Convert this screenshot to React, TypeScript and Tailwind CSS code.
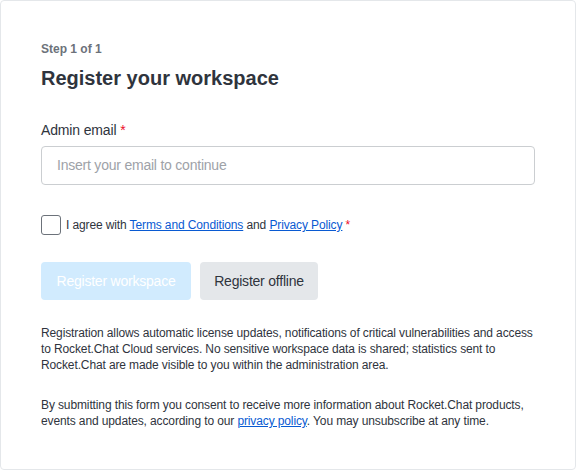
import React from "react";

export default function App() {
  return (
    <div className="w-[576px] h-[470px] bg-white" style={{ fontFamily: "'Liberation Sans', Arial, sans-serif" }}>
      <div className="w-[576px] h-[470px] border border-[#e4e7ea] rounded-[4px] px-10 pt-[40px] text-[#2f343d]">
        <div className="text-[12px] leading-4 font-bold text-[#6c727a]">Step 1 of 1</div>
        <h1 className="mt-[7px] text-[20px] leading-7 font-bold text-[#2f343d]">Register your workspace</h1>
        <div className="mt-[28px] text-[14px] leading-5 tracking-[-0.15px]">
          Admin email <span className="text-[#ec0d2a]">*</span>
        </div>
        <div className="mt-[6px] h-[39px] w-[494px] border border-[#cbced1] rounded-[4px] flex items-center pl-[15px] pr-4">
          <span className="text-[14px] text-[#9ea2a8] tracking-[-0.22px]">Insert your email to continue</span>
        </div>
        <div className="mt-[30px] flex items-center gap-[5px] text-[12px] leading-4 tracking-[-0.12px]">
          <span className="w-[20px] h-[20px] border-[1.5px] border-[#6c727a] rounded-[3px] box-border" />
          <span>
            I agree with <a className="text-[#095ad2] underline">Terms and Conditions</a> and{" "}
            <a className="text-[#095ad2] underline">Privacy Policy</a> <span className="text-[#ec0d2a]">*</span>
          </span>
        </div>
        <div className="mt-[27px] flex gap-[9px]">
          <div className="h-[38px] w-[150px] rounded-[4px] bg-[#d1ebfe] text-white text-[14px] tracking-[-0.22px] flex items-center justify-center">Register workspace</div>
          <div className="h-[38px] w-[118px] rounded-[4px] bg-[#e4e7ea] text-[#2f343d] text-[14px] tracking-[-0.22px] flex items-center justify-center">Register offline</div>
        </div>
        <p className="mt-[25px] text-[12px] leading-4 text-[#2f343d] tracking-[-0.12px]">
          Registration allows automatic license updates, notifications of critical vulnerabilities and access to Rocket.Chat Cloud services. No sensitive workspace data is shared; statistics sent to Rocket.Chat are made visible to you within the administration area.
        </p>
        <p className="mt-[24px] text-[12px] leading-4 text-[#2f343d] tracking-[-0.12px]">
          By submitting this form you consent to receive more information about Rocket.Chat products, events and updates, according to our <a className="text-[#095ad2] underline">privacy policy</a>. You may unsubscribe at any time.
        </p>
      </div>
    </div>
  );
}
